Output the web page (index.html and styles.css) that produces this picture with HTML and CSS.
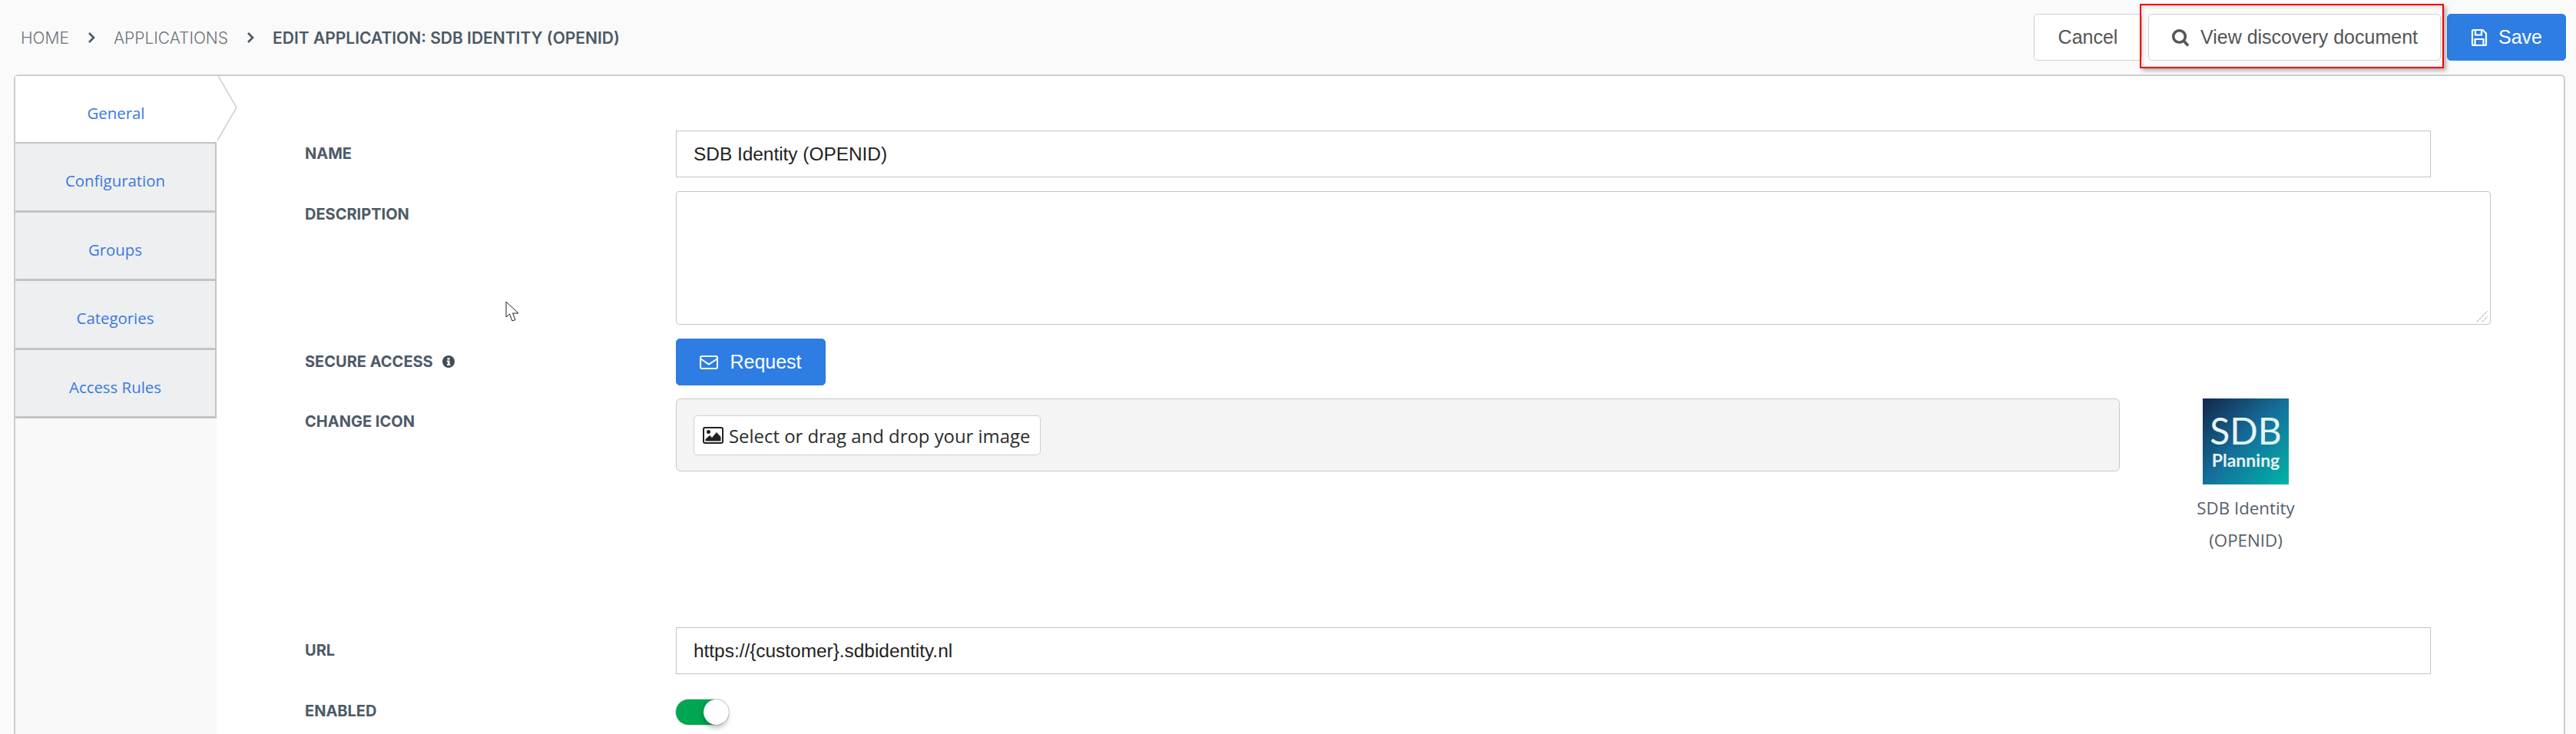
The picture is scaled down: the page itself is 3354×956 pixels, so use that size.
FILE: index.html
```html
<!DOCTYPE html>
<html lang="en">
<head>
<meta charset="utf-8">
<title>Edit application</title>
<link rel="stylesheet" href="styles.css">
</head>
<body>
<header class="topbar">
  <nav class="crumbs">
    <span class="crumb">HOME</span>
    <svg class="crumb-sep" viewBox="0 0 10 16"><path d="M2 2l6 6-6 6" /></svg>
    <span class="crumb">APPLICATIONS</span>
    <svg class="crumb-sep" viewBox="0 0 10 16"><path d="M2 2l6 6-6 6" /></svg>
    <span class="crumb crumb-current">EDIT APPLICATION: SDB IDENTITY (OPENID)</span>
  </nav>
  <div class="actions">
    <button class="btn btn-cancel">Cancel</button>
    <button class="btn btn-view">
      <svg class="ico-search" viewBox="0 0 24 24"><circle cx="10.5" cy="10.5" r="7.8"/><path d="M16 16l6 6.4"/></svg>
      View discovery document
    </button>
    <button class="btn btn-primary btn-save">
      <svg class="ico-save" viewBox="0 0 22 24"><path d="M2 3.5A1.5 1.5 0 0 1 3.500 2H15.500L20 6.500V20.500A1.500 1.500 0 0 1 18.500 22H3.500A1.500 1.500 0 0 1 2 20.500Z"/><path d="M6 2.500V8.500H14V2.500M5.500 21.500V14H16.500V21.500"/></svg>
      Save
    </button>
  </div>
  <div class="highlight"></div>
</header>

<main class="card">
  <aside class="tabs">
    <a class="tab tab-active">General
      <svg class="tab-arrow" viewBox="0 0 27 88"><path d="M1 0L26 43L1 86"/></svg>
    </a>
    <a class="tab">Configuration</a>
    <a class="tab">Groups</a>
    <a class="tab">Categories</a>
    <a class="tab">Access Rules</a>
  </aside>

  <section class="form">
    <div class="row row-name">
      <div class="label">NAME</div>
      <div class="field-box field-name">SDB Identity (OPENID)</div>
    </div>
    <div class="row row-desc">
      <div class="label">DESCRIPTION</div>
      <div class="textarea">
        <svg class="grip" viewBox="0 0 15 15"><path d="M0 14L14 0M7 14L14 7"/></svg>
      </div>
    </div>
    <div class="row row-secure">
      <div class="label">SECURE ACCESS
        <svg class="ico-info" viewBox="0 0 16 16"><circle cx="8" cy="8" r="8"/><path class="info-i" d="M6.500 3h3v2.400h-3zM5.800 6.600h3.700v4.800h1v1.600H5.800v-1.600h1v-3.200h-1z"/></svg>
      </div>
      <button class="btn btn-primary btn-request">
        <svg class="ico-mail" viewBox="0 0 24 18"><rect x="1" y="1" width="22" height="16" rx="2"/><path d="M1.500 4.500L12 11.500L22.500 4.500"/></svg>
        Request
      </button>
    </div>
    <div class="row row-icon">
      <div class="label">CHANGE ICON</div>
      <div class="drop">
        <div class="drop-btn">
          <svg class="ico-image" viewBox="0 0 27 22"><rect x="1" y="1" width="25" height="20" rx="2"/><circle cx="7.500" cy="6.500" r="2.500" class="fill"/><path class="fill" d="M3.500 18.500V16L9 11l3 3 6-7 5.500 6v5.500z"/></svg>
          Select or drag and drop your image
        </div>
      </div>
      <div class="app-preview">
        <div class="logo">
          <span class="logo-mark">SDB</span>
          <span class="logo-sub">Planning</span>
        </div>
        <div class="app-name">SDB Identity<br>(OPENID)</div>
      </div>
    </div>
    <div class="row row-url">
      <div class="label">URL</div>
      <div class="field-box field-name">https://{customer}.sdbidentity.nl</div>
    </div>
    <div class="row">
      <div class="label">ENABLED</div>
      <div class="toggle"><span class="knob"></span></div>
    </div>
  </section>
  <svg class="cursor" viewBox="0 0 18 27"><path d="M1 1V21L5.500 17L9 26L13 24.500L9.500 16H17Z"/></svg>
</main>
</body>
</html>
```
FILE: styles.css
```css
* { box-sizing: border-box; }
html, body { margin: 0; height: 956px; overflow: hidden; }
body {
  position: relative;
  background: #fafafa;
  font-family: "Liberation Sans", Arial, sans-serif;
  color: #555;
}
.topbar {
  height: 97px;
  display: flex;
  align-items: flex-start;
  justify-content: space-between;
  padding: 18px 13px 0 27px;
}
.crumbs {
  display: flex;
  align-items: center;
  height: 62px;
  font-family: Inter, "Liberation Sans", sans-serif;
  font-size: 21px;
  color: #6d747b;
}
.crumb { font-weight: 300; }
.crumb-current { font-weight: 600; color: #4b5966; }
.crumb-sep { width: 10px; height: 16px; margin: 0 24px; fill: none; stroke: #4b5966; stroke-width: 2.600; }
.actions { display: flex; gap: 0; }
.btn {
  font-family: "Liberation Sans", Arial, sans-serif;
  font-size: 25px;
  height: 61px;
  display: flex;
  align-items: center;
  justify-content: center;
  border-radius: 5px;
  border: 1.500px solid #cfcfcf;
  background: #fff;
  color: #555;
  padding: 0;
}
.btn-cancel { width: 141px; }
.btn-view { width: 381px; margin-left: 8px; gap: 14px; }
.btn-primary { background: #2d7de2; border-color: #2d7de2; color: #fff; }
.btn-save { width: 155px; margin-left: 8px; gap: 14px; }
.ico-search { width: 24px; height: 24px; fill: none; stroke: #555; stroke-width: 3.600; }
.ico-save { width: 22px; height: 24px; fill: none; stroke: #fff; stroke-width: 2.200; }
.highlight {
  position: absolute;
  left: 2786px;
  top: 5px;
  width: 396px;
  height: 84px;
  border: 2px solid #f40000;
  box-shadow: 3px 3px 5px rgba(0,0,0,.3), inset 2px 2px 4px rgba(0,0,0,.12);
}
.card {
  position: relative;
  margin: 0 14px 0 18px;
  height: 859px;
  display: flex;
  background: #fff;
  border: 2px solid #cdcdcd;
  border-bottom: 0;
  border-radius: 6px 6px 0 0;
}
.tabs {
  width: 262px;
  flex: none;
  background: #f9f9f9;
  display: flex;
  flex-direction: column;
}
.tab {
  position: relative;
  flex: none;
  height: 89.500px;
  padding-top: 30px;
  text-align: center;
  font-family: "Open Sans", sans-serif;
  font-size: 20.400px;
  line-height: 36px;
  color: #3a78e0;
  background: #eeeff1;
  border-right: 2px solid #c4c4c4;
  border-bottom: 3px solid #c4c4c4;
}
.tab-active {
  height: 88px;
  padding-top: 30px;
  background: #fff;
  border-right: 0;
  border-bottom-width: 2px;
  border-top-left-radius: 6px;
}
.tab-arrow {
  position: absolute;
  left: 262px;
  top: -2px;
  width: 27px;
  height: 88px;
  fill: #fff;
  stroke: #cfcfcf;
  stroke-width: 1.500;
}
.form {
  flex: 1;
  padding: 71px 0 0 115px;
  display: flex;
  flex-direction: column;
}
.row { display: flex; flex: none; align-items: flex-start; margin-bottom: 18px; }
.row-secure { margin-bottom: 17px; }
.row-icon { height: 280px; }
.label {
  width: 483px;
  flex: none;
  height: 59px;
  display: flex;
  align-items: center;
  gap: 12px;
  font-family: Inter, "Liberation Sans", sans-serif;
  font-size: 20px;
  font-weight: 700;
  color: #4d5a67;
}
.field-box {
  width: 2285px;
  height: 61px;
  display: flex;
  align-items: center;
  padding-left: 22px;
  border: 1.500px solid #c4c4c4;
  background: #fff;
  font-size: 24.400px;
  color: #222;
}
.textarea {
  position: relative;
  width: 2363px;
  height: 174px;
  border: 1.500px solid #c4c4c4;
  border-radius: 4px;
  background: #fff;
}
.grip {
  position: absolute;
  right: 2px;
  bottom: 2px;
  width: 15px;
  height: 15px;
  fill: none;
  stroke: #666;
  stroke-width: 1;
  stroke-dasharray: 1 1;
}
.ico-info { width: 16px; height: 16px; }
.ico-info circle { fill: #3f4d5a; }
.info-i { fill: #fff; }
.btn-request { width: 195px; gap: 15px; }
.ico-mail { width: 24px; height: 18px; fill: none; stroke: #fff; stroke-width: 2; }
.drop {
  width: 1880px;
  height: 95px;
  flex: none;
  padding: 21px 0 0 22px;
  background: #f4f4f4;
  border: 1.500px solid #c8c8c8;
  border-radius: 6px;
}
.drop-btn {
  width: 452px;
  height: 52px;
  display: flex;
  align-items: center;
  gap: 7px;
  padding-left: 11px;
  background: #fff;
  border: 1.500px solid #cfcfcf;
  border-radius: 5px;
  font-family: "Open Sans", sans-serif;
  font-size: 23.900px;
  color: #2b2b2b;
  white-space: nowrap;
}
.ico-image { width: 27px; height: 22px; fill: none; stroke: #222; stroke-width: 2; flex: none; }
.ico-image .fill { fill: #222; stroke: none; }
.app-preview {
  margin-left: 108px;
  width: 112px;
  display: flex;
  flex-direction: column;
  align-items: center;
}
.logo {
  width: 112px;
  height: 112px;
  flex: none;
  display: flex;
  flex-direction: column;
  align-items: center;
  background: linear-gradient(135deg, #14264a 0%, #14709b 50%, #00b5a8 100%);
  color: #e6f4f5;
  overflow: hidden;
}
.logo-mark {
  font-family: Lato, sans-serif;
  font-weight: 400;
  font-size: 48px;
  line-height: 44px;
  margin-top: 20px;
  letter-spacing: 0;
}
.logo-sub {
  font-family: Lato, sans-serif;
  font-weight: 700;
  font-size: 23px;
  line-height: 24px;
  margin-top: 4px;
}
.app-name {
  width: 180px;
  flex: none;
  margin-top: 10px;
  text-align: center;
  font-family: "Open Sans", sans-serif;
  font-size: 22.300px;
  line-height: 42px;
  color: #55606b;
}
.toggle {
  position: relative;
  width: 69px;
  height: 33px;
  margin-top: 15px;
  background: #00a651;
  border-radius: 17px;
  box-shadow: 0 0 0 1px #ddd;
}
.knob {
  position: absolute;
  right: 0;
  top: 0;
  width: 33px;
  height: 33px;
  border-radius: 50%;
  background: #fff;
  box-shadow: -1px 4px 6px rgba(0,0,0,.25);
}
.cursor {
  position: absolute;
  left: 638px;
  top: 293px;
  width: 18px;
  height: 27px;
  fill: #fff;
  stroke: #222;
  stroke-width: 1;
}
```
